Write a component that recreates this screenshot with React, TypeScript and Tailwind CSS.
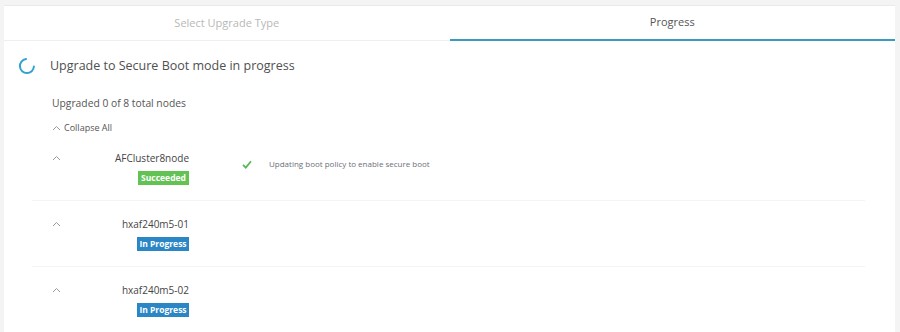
import React from "react";

type Node = { name: string; status: "Succeeded" | "In Progress"; step?: string };

const nodes: Node[] = [
  { name: "AFCluster8node", status: "Succeeded", step: "Updating boot policy to enable secure boot" },
  { name: "hxaf240m5-01", status: "In Progress" },
  { name: "hxaf240m5-02", status: "In Progress" },
];

function Chevron() {
  return (
    <svg width="9" height="6" viewBox="0 0 9 6" fill="none">
      <polyline points="1,5 4.5,1.5 8,5" stroke="#9a9a9a" strokeWidth="1" />
    </svg>
  );
}

function Spinner() {
  return (
    <svg width="18" height="18" viewBox="0 0 18 18" fill="none">
      <path d="M8 2.1 A7 7 0 1 0 15.9 9.5" stroke="#2ea3cf" strokeWidth="2" strokeLinecap="round" />
    </svg>
  );
}

function Check() {
  return (
    <svg width="10" height="9" viewBox="0 0 10 9" fill="none">
      <polyline points="1,4.8 3.8,7.6 9,1.2" stroke="#5cb85c" strokeWidth="1.8" />
    </svg>
  );
}

function NodeRow({ node, last }: { node: Node; last: boolean }) {
  const badge =
    node.status === "Succeeded" ? (
      <span className="inline-block h-[14px] w-[51px] bg-[#62c254] text-center text-[8.5px] font-bold leading-[14px] text-white">
        Succeeded
      </span>
    ) : (
      <span className="inline-block h-[14px] w-[52px] bg-[#2b86c5] text-center text-[8.5px] font-bold leading-[14px] text-white">
        In Progress
      </span>
    );
  return (
    <div className={`flex pl-[20px] ${last ? "pt-[15px]" : "pb-[15px] pt-[15px] border-b border-[#f5f5f5]"}`}>
      <div className="flex h-[16px] w-[10px] items-center">
        <Chevron />
      </div>
      <div className="flex w-[127px] flex-col items-end">
        <div className="h-[16px] text-[10px] leading-[16px] text-[#444]">{node.name}</div>
        <div className="mt-[5px] flex">{badge}</div>
      </div>
      {node.step && (
        <div className="ml-[53px] mt-[8px] flex h-[12px] items-center">
          <Check />
          <span className="ml-[17px] text-[8px] text-[#6b6f78]">{node.step}</span>
        </div>
      )}
    </div>
  );
}

export default function App() {
  return (
    <div
      className="h-[332px] w-[900px] overflow-hidden bg-[#f4f4f4] pl-[4px] pr-[5px] pt-[5px]"
      style={{ fontFamily: '"Open Sans", "Liberation Sans", sans-serif' }}
    >
      <div className="h-full border-t border-[#e9e9e9] bg-white">
        <div className="flex">
          <div className="flex h-[35px] flex-1 items-center justify-center border-b border-[#efefef] text-[11px] text-[#b8b8b8]">
            Select Upgrade Type
          </div>
          <div className="flex h-[35px] flex-1 items-center justify-center border-b-2 border-[#3a9bbf] text-[11px] text-[#555]">
            Progress
          </div>
        </div>

        <div className="pl-[14px] pt-[15px]">
          <div className="flex items-center">
            <Spinner />
            <span className="ml-[14px] text-[12.5px] leading-[20px] text-[#505050]">
              Upgrade to Secure Boot mode in progress
            </span>
          </div>
        </div>

        <div className="pl-[48px] pt-[19px]">
          <div className="text-[10.3px] leading-[16px] text-[#555]">Upgraded 0 of 8 total nodes</div>
          <div className="mt-[10px] flex items-center text-[9px] leading-[14px] text-[#555]">
            <Chevron />
            <span className="ml-[3px]">Collapse All</span>
          </div>
        </div>

        <div className="ml-[28px] mr-[30px] mt-0">
          {nodes.map((n, i) => (
            <NodeRow key={n.name} node={n} last={i === nodes.length - 1} />
          ))}
        </div>
      </div>
    </div>
  );
}
